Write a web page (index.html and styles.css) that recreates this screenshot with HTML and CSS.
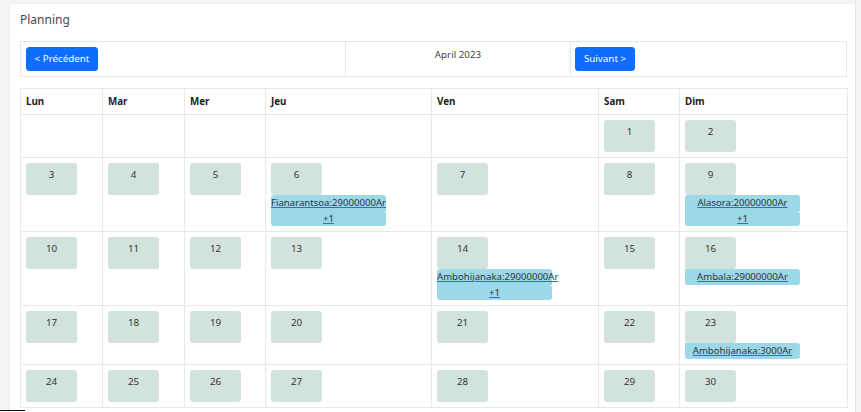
FILE: index.html
```html
<!DOCTYPE html>
<html lang="fr">
<head>
<meta charset="utf-8">
<title>Planning</title>
<link rel="stylesheet" href="styles.css">
</head>
<body>
<div class="page">
  <div class="card">
    <div class="title">Planning</div>
    <table class="nav">
      <tr>
        <td class="nav-prev"><button class="btn">&lt; Précédent</button></td>
        <td class="nav-month">April 2023</td>
        <td class="nav-next"><button class="btn">Suivant &gt;</button></td>
      </tr>
    </table>
    <table class="cal">
      <colgroup>
        <col class="c-lun"><col class="c-mar"><col class="c-mer"><col class="c-jeu"><col class="c-ven"><col class="c-sam"><col class="c-dim">
      </colgroup>
      <thead>
        <tr><th>Lun</th><th>Mar</th><th>Mer</th><th>Jeu</th><th>Ven</th><th>Sam</th><th>Dim</th></tr>
      </thead>
      <tbody>
        <tr class="r1">
          <td></td><td></td><td></td><td></td><td></td>
          <td><div class="day">1</div></td>
          <td><div class="day">2</div></td>
        </tr>
        <tr class="r2">
          <td><div class="day">3</div></td>
          <td><div class="day">4</div></td>
          <td><div class="day">5</div></td>
          <td><div class="day">6</div><a class="ev ev-a" href="#">Fianarantsoa:29000000Ar</a><a class="ev ev-b" href="#">+1</a></td>
          <td><div class="day">7</div></td>
          <td><div class="day">8</div></td>
          <td><div class="day">9</div><a class="ev ev-a" href="#">Alasora:20000000Ar</a><a class="ev ev-b" href="#">+1</a></td>
        </tr>
        <tr class="r3">
          <td><div class="day">10</div></td>
          <td><div class="day">11</div></td>
          <td><div class="day">12</div></td>
          <td><div class="day">13</div></td>
          <td><div class="day">14</div><a class="ev ev-a" href="#">Ambohijanaka:29000000Ar</a><a class="ev ev-b" href="#">+1</a></td>
          <td><div class="day">15</div></td>
          <td><div class="day">16</div><a class="ev ev-a ev-one" href="#">Ambala:29000000Ar</a></td>
        </tr>
        <tr class="r4">
          <td><div class="day">17</div></td>
          <td><div class="day">18</div></td>
          <td><div class="day">19</div></td>
          <td><div class="day">20</div></td>
          <td><div class="day">21</div></td>
          <td><div class="day">22</div></td>
          <td><div class="day">23</div><a class="ev ev-a ev-one" href="#">Ambohijanaka:3000Ar</a></td>
        </tr>
        <tr class="r5">
          <td><div class="day">24</div></td>
          <td><div class="day">25</div></td>
          <td><div class="day">26</div></td>
          <td><div class="day">27</div></td>
          <td><div class="day">28</div></td>
          <td><div class="day">29</div></td>
          <td><div class="day">30</div></td>
        </tr>
      </tbody>
    </table>
  </div>
  <div class="scroll-edge"></div>
</div>
<div class="taskbar-edge"></div>
</body>
</html>
```
FILE: styles.css
```css
html, body {
  margin: 0;
  padding: 0;
}
body {
  background: #f4f5f7;
  font-family: "Noto Sans", "Open Sans", "Liberation Sans", sans-serif;
  color: #333;
  width: 861px;
  height: 412px;
  overflow: hidden;
  position: relative;
}
.page {
  display: flex;
  padding: 4px 0 0 10px;
  height: 408px;
}
.card {
  background: #fff;
  width: 825px;
  padding: 9px 10px 0 10px;
  box-shadow: 0 0 4px rgba(0,0,0,0.05);
}
.scroll-edge {
  width: 1px;
  background: #e3e4e6;
  height: 412px;
  margin-top: -4px;
}
.title {
  font-size: 12px;
  color: #4a4a4a;
  height: 28px;
  line-height: 14px;
}
table {
  border-collapse: collapse;
  width: 827px;
  table-layout: fixed;
}
.nav td {
  border: 1px solid #e6e8eb;
  height: 24px;
  padding: 5px 5px 4px 5px;
  vertical-align: top;
}
.nav-prev { width: 314px; }
.nav-month {
  width: 214px;
  text-align: center;
  font-size: 9.8px;
  color: #444;
  line-height: 14px;
}
.nav td.nav-month { padding-top: 6px; }
.btn {
  display: block;
  background: #0d6efd;
  color: #fff;
  border: 1px solid #0d6efd;
  border-radius: 3px;
  font-family: inherit;
  font-size: 9.8px;
  height: 24px;
  padding: 0 7px;
  line-height: 20px;
  white-space: nowrap;
  cursor: pointer;
}
.nav-prev .btn { width: 72px; }
.nav-next .btn { width: 60px; }
.nav td.nav-next { padding-left: 4px; }
.cal {
  margin-top: 11px;
}
.c-lun { width: 82px; }
.c-mar { width: 82px; }
.c-mer { width: 81px; }
.c-jeu { width: 166px; }
.c-ven { width: 167px; }
.c-sam { width: 81px; }
.c-dim { width: 168px; }
.cal th, .cal td {
  border: 1px solid #e6e8eb;
  padding: 5px;
  text-align: left;
  vertical-align: top;
}
.cal th {
  height: 15px;
  font-size: 9.8px;
  font-weight: 700;
  color: #222;
  line-height: 15px;
}
.r1 td { height: 32px; }
.r2 td { height: 63px; }
.r3 td { height: 63px; }
.r4 td { height: 48px; }
.r5 td { height: 32px; }
.day {
  width: 51px;
  height: 32px;
  box-sizing: border-box;
  background: #d2e3dd;
  border-radius: 3px;
  text-align: center;
  font-size: 9.8px;
  line-height: 14px;
  padding-top: 5px;
  color: #333;
}
.ev {
  display: block;
  width: 115px;
  box-sizing: border-box;
  background: #9bd8ea;
  text-align: center;
  font-size: 9.6px;
  color: #333;
  text-decoration: underline;
  text-decoration-color: #2b6fd6;
  white-space: nowrap;
}
.ev-a {
  height: 16px;
  line-height: 16px;
  border-radius: 3px 3px 0 0;
}
.ev-b {
  height: 15px;
  line-height: 15px;
  border-radius: 0 3px 3px 3px;
}
.ev-one {
  border-radius: 0 3px 3px 3px;
}
.taskbar-edge {
  position: absolute;
  left: 0;
  bottom: 1px;
  width: 25px;
  height: 1px;
  background: #111;
}
```
